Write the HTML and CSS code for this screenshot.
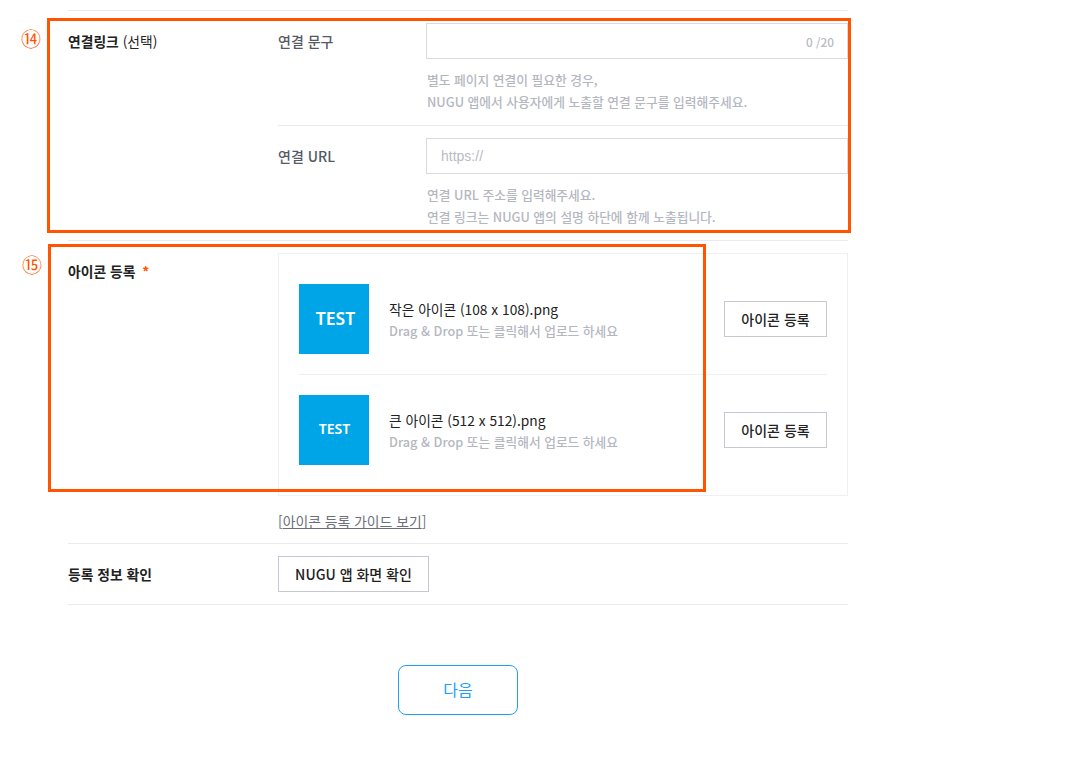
FILE: index.html
```html
<!DOCTYPE html>
<html lang="ko">
<head>
<meta charset="utf-8">
<title>NUGU</title>
<link rel="stylesheet" href="styles.css">
</head>
<body>
<main class="page">
  <section class="row row-link">
    <div class="label"><b>연결링크</b> (선택)</div>
    <div class="fields">
      <div class="field field-first">
        <div class="field-name">연결 문구</div>
        <div class="field-body">
          <div class="input"><span class="count">0 /20</span></div>
          <p class="hint">별도 페이지 연결이 필요한 경우,<br>NUGU 앱에서 사용자에게 노출할 연결 문구를 입력해주세요.</p>
        </div>
      </div>
      <div class="field field-second">
        <div class="field-name">연결 URL</div>
        <div class="field-body">
          <div class="input"><span class="placeholder">https://</span></div>
          <p class="hint">연결 URL 주소를 입력해주세요.<br>연결 링크는 NUGU 앱의 설명 하단에 함께 노출됩니다.</p>
        </div>
      </div>
    </div>
  </section>

  <section class="row row-icon">
    <div class="label"><b>아이콘 등록</b><span class="star">*</span></div>
    <div class="icon-col">
      <div class="panel">
        <div class="icon-item">
          <div class="thumb thumb-big">TEST</div>
          <div class="icon-text">
            <div class="file-name">작은 아이콘 (108 x 108).png</div>
            <div class="drop">Drag &amp; Drop 또는 클릭해서 업로드 하세요</div>
          </div>
          <button class="btn btn-small">아이콘 등록</button>
        </div>
        <div class="icon-item icon-item-second">
          <div class="thumb thumb-small">TEST</div>
          <div class="icon-text">
            <div class="file-name">큰 아이콘 (512 x 512).png</div>
            <div class="drop">Drag &amp; Drop 또는 클릭해서 업로드 하세요</div>
          </div>
          <button class="btn btn-small">아이콘 등록</button>
        </div>
      </div>
      <div class="guide">[<a class="guide-link">아이콘 등록 가이드 보기</a>]</div>
    </div>
  </section>

  <section class="row row-check">
    <div class="label"><b>등록 정보 확인</b></div>
    <button class="btn btn-check">NUGU 앱 화면 확인</button>
  </section>

  <div class="actions"><button class="next">다음</button></div>
</main>

<div class="mark mark-link"></div>
<div class="mark mark-icon"></div>
<div class="num num-14">⑭</div>
<div class="num num-15">⑮</div>
</body>
</html>
```

FILE: styles.css
```css
* { box-sizing: border-box; }
html, body { margin: 0; padding: 0; background: #fff; }
body {
  position: relative;
  height: 774px;
  overflow: hidden;
  font-family: "Noto Sans CJK KR", "Noto Sans", sans-serif;
  font-size: 14px;
  color: #222;
}
.page { width: 780px; margin-left: 68px; padding-top: 10px; }
.row { display: flex; border-top: 1px solid #e9eaee; }
.label { width: 210px; flex: none; font-size: 13.8px; line-height: 20px; color: #222; }
.label b { font-weight: 700; }

.row-link { height: 230px; }
.row-link .label { padding-top: 20px; }
.fields { flex: 1; }
.field { display: flex; }
.field-first { height: 115px; padding-top: 12px; border-bottom: 1px solid #e9eaee; }
.field-second { padding-top: 12px; }
.field-name { width: 148px; flex: none; font-size: 14px; line-height: 36px; color: #555a64; font-weight: 500; }
.field-body { flex: 1; }
.input {
  height: 36px;
  border: 1px solid #d9dae1;
  display: flex;
  align-items: center;
  padding: 0 13px 0 14px;
  background: #fff;
}
.count { margin-left: auto; font-size: 11.8px; font-weight: 500; color: #b8bac2; }
.placeholder { font-family: "Liberation Sans", sans-serif; font-size: 14px; color: #b9bbc2; }
.hint { margin: 10px 0 0; padding-left: 1px; font-size: 12.75px; font-weight: 500; line-height: 22px; color: #b5b7bf; }

.row-icon { height: 303px; padding-top: 12px; }
.row-icon .label { padding-top: 8px; }
.star { color: #ff5500; margin-left: 7px; font-weight: 700; }
.icon-col { flex: 1; }
.panel { height: 243px; border: 1px solid #eff0f4; padding: 10px 20px 0; }
.icon-item { height: 110px; display: flex; align-items: center; }
.icon-item-second { height: 111px; border-top: 1px solid #eff0f4; }
.thumb {
  width: 70px;
  height: 70px;
  flex: none;
  display: flex;
  align-items: center;
  justify-content: center;
  background: #00a5e8;
  color: #fff;
  font-family: "Noto Sans", sans-serif;
  font-weight: 600;
}
.thumb-big { font-size: 17.5px; padding: 0 0 2px 3px; }
.thumb-small { font-size: 14px; padding: 0 0 4px 1px; }
.icon-text { flex: 1; padding-left: 20px; }
.file-name { font-size: 13.75px; line-height: 22px; color: #222; }
.drop { padding-top: 1px; font-size: 12.72px; font-weight: 500; line-height: 20px; color: #b5b7bf; }
.btn {
  background: #fff;
  border: 1px solid #c6c8d2;
  font-family: inherit;
  font-size: 14px;
  font-weight: 500;
  color: #222;
  padding: 0;
  height: 36px;
}
.btn-small { width: 103px; flex: none; }
.guide { height: 47px; padding-top: 14px; font-size: 13.85px; line-height: 22px; color: #6b6f78; }
.guide-link { text-decoration: underline; }

.row-check { height: 62px; align-items: center; border-bottom: 1px solid #e9eaee; }
.btn-check { width: 151px; }

.actions { padding: 60px 0 0 330px; }
.next {
  width: 120px;
  height: 50px;
  border: 1px solid #1ea1f5;
  border-radius: 8px;
  background: #fff;
  font-family: inherit;
  font-size: 16px;
  color: #1ea1f5;
  padding: 0 0 2px;
}

.mark { position: absolute; border: 3px solid #ff5500; }
.mark-link { left: 47px; top: 18px; width: 804px; height: 215px; }
.mark-icon { left: 48px; top: 244px; width: 658px; height: 248px; }
.num { position: absolute; font-size: 20px; line-height: 24px; color: #ff5500; }
.num-14 { left: 21px; top: 27px; }
.num-15 { left: 22px; top: 253px; }
```
